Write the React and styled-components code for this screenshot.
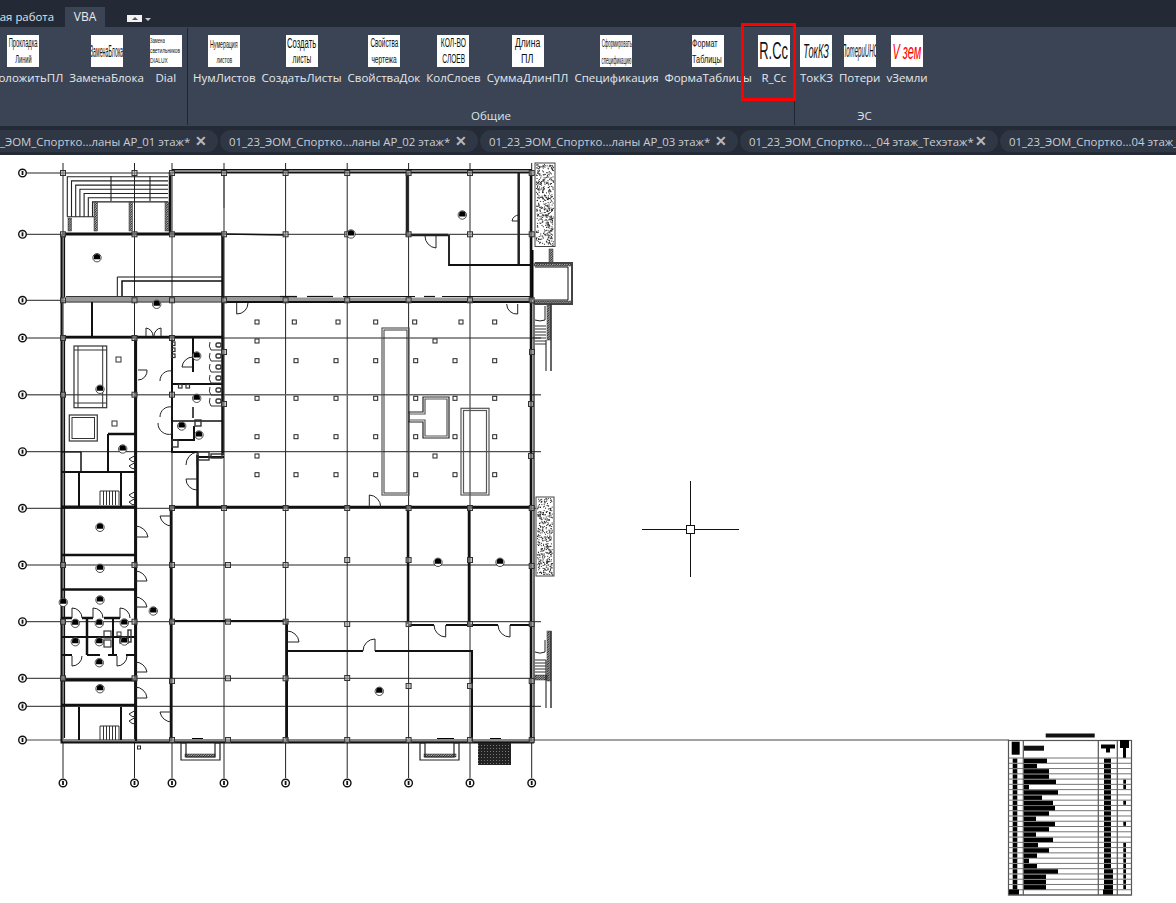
import React from "react";
import styled, { createGlobalStyle } from "styled-components";

const GlobalStyle = createGlobalStyle`
  html, body { margin: 0; padding: 0; background: #fff; overflow: hidden; }
  body { font-family: "Open Sans", "Noto Sans", sans-serif; }
`;

const Page = styled.div`
  position: relative;
  width: 1176px;
  height: 903px;
  overflow: hidden;
  display: flex;
  flex-direction: column;
`;

const TopStrip = styled.div`
  height: 27px;
  flex: none;
  background: #232a35;
  display: flex;
  align-items: flex-end;
`;

const ClippedTab = styled.div`
  width: 65px;
  height: 20px;
  line-height: 20px;
  padding-right: 11px;
  box-sizing: border-box;
  display: flex;
  justify-content: flex-end;
  overflow: hidden;
  white-space: nowrap;
  font-size: 11.4px;
  color: #dfe3e8;
`;

const ActiveTab = styled.div`
  width: 40px;
  height: 20px;
  line-height: 20px;
  text-align: center;
  font-size: 12px;
  color: #e8ebef;
  background: #3b4454;
`;

const Minimize = styled.div`
  margin: 0 0 5px 22px;
  width: 15px;
  height: 7px;
  background: #f2f2f2;
  display: flex;
  align-items: center;
  justify-content: center;
  &::after {
    content: "";
    border: 3px solid transparent;
    border-top: 0;
    border-bottom: 3px solid #555;
  }
`;

const Caret = styled.div`
  margin: 0 0 6px 3px;
  border: 3px solid transparent;
  border-bottom: 0;
  border-top: 3px solid #c8ccd2;
`;

const Ribbon = styled.div`
  height: 99px;
  flex: none;
  background: #3b4454;
  display: flex;
  margin-left: -17px;
`;

const Panel = styled.div`
  display: flex;
  flex-direction: column;
  width: ${(p) => p.$width}px;
  border-right: 1px solid ${(p) => (p.$last ? "transparent" : "#20262f")};
  margin: 1px 0;
  box-sizing: border-box;
`;

const PanelButtons = styled.div`
  flex: 1;
  display: flex;
  gap: 6px;
  padding-left: ${(p) => p.$pad}px;
`;

const PanelTitle = styled.div`
  height: 22px;
  text-align: center;
  font-size: 11.5px;
  line-height: 26px;
  color: #dfe3e8;
`;

const ToolButton = styled.div`
  display: flex;
  flex-direction: column;
  align-items: center;
  padding-top: 7px;
  flex: none;
`;

const Icon = styled.div`
  width: 32px;
  height: 32px;
  background: #fff;
  display: flex;
  flex-direction: column;
  align-items: ${(p) => (p.$left ? "flex-start" : "center")};
  justify-content: center;
  gap: ${(p) => p.$gap || 0}px;
  overflow: hidden;
  flex: none;
`;

const IconLine = styled.span`
  display: block;
  white-space: nowrap;
  font-family: "Liberation Sans", Arial, sans-serif;
  font-size: ${(p) => p.$size}px;
  line-height: ${(p) => p.$size + 1}px;
  font-style: ${(p) => (p.$italic ? "italic" : "normal")};
  color: ${(p) => p.$color || "#111"};
  transform: scaleX(${(p) => p.$sx});
  transform-origin: ${(p) => (p.$left ? "left center" : "center")};
`;

const ToolLabel = styled.div`
  margin-top: 3px;
  font-size: 11.5px;
  line-height: 16px;
  white-space: nowrap;
  color: #e6e9ed;
`;

const DocTabs = styled.div`
  height: 29px;
  flex: none;
  background: #252b36;
  display: flex;
  gap: 2px;
  padding-top: 4px;
  box-sizing: border-box;
  margin-left: -40px;
`;

const DocTab = styled.div`
  width: 258px;
  height: 22px;
  flex: none;
  background: #2f3644;
  border-radius: 11px;
  display: flex;
  align-items: center;
  justify-content: space-between;
  box-sizing: border-box;
  padding: 0 11px 0 9px;
  font-size: 11.4px;
  color: #c9ced6;
  white-space: nowrap;
`;

const CloseMark = styled.span`
  font-family: "Liberation Sans", Arial, sans-serif;
  font-size: 14px;
  font-weight: 700;
  line-height: 1;
  color: #b4b9c1;
`;

const Canvas = styled.div`
  flex: 1;
  background: #fff;
  min-height: 0;
`;

const Highlight = styled.div`
  position: absolute;
  left: 741px;
  top: 23px;
  width: 55px;
  height: 78px;
  box-sizing: border-box;
  border: 3px solid #f00;
  pointer-events: none;
`;

const panels = [
  {
    width: 205,
    pad: 0,
    tools: [
      { label: "ПроложитьПЛ", lines: [["Прокладка", 12, 0.48], ["Линий", 10, 0.57]], gap: 4 },
      { label: "ЗаменаБлока", lines: [["ЗаменаБлока", 16, 0.33]] },
      { label: "Dial", lines: [["Замена", 7, 0.6], ["светильников", 7, 0.68], ["DIALUX", 7, 0.7]], gap: 2, left: true },
    ],
  },
  {
    width: 607,
    pad: 5,
    title: "Общие",
    tools: [
      { label: "НумЛистов", lines: [["Нумерация", 11, 0.48], ["листов", 9, 0.55]], gap: 5 },
      { label: "СоздатьЛисты", lines: [["Создать", 14, 0.55], ["листы", 12, 0.55]], gap: 2 },
      { label: "СвойстваДок", lines: [["Свойства", 12, 0.53], ["чертежа", 11, 0.6]], gap: 3 },
      { label: "КолСлоев", lines: [["КОЛ-ВО", 12, 0.56], ["СЛОЕВ", 12, 0.55]], gap: 3 },
      { label: "СуммаДлинПЛ", lines: [["Длина", 12, 0.72], ["ПЛ", 12, 0.75]], gap: 3 },
      { label: "Спецификация", lines: [["Сформировать", 11, 0.39], ["спецификацию", 11, 0.39]], gap: 5 },
      { label: "ФормаТаблицы", lines: [["Формат", 10, 0.72], ["Таблицы", 11, 0.66]], gap: 4, left: true },
      { label: "R_Cc", lines: [["R.Cc", 23, 0.56]] },
    ],
  },
  {
    width: 140,
    pad: 5,
    last: true,
    title: "ЭС",
    tools: [
      { label: "ТокКЗ", lines: [["ТокКЗ", 20, 0.46, { italic: true }]] },
      { label: "Потери", lines: [["ПотериUНО", 19, 0.32, { italic: true }]] },
      { label: "vЗемли", lines: [["V зем", 22, 0.5, { italic: true, color: "#f00" }]] },
    ],
  },
];

const docTabs = [
  "01_23_ЭОМ_Спортко...ланы АР_01 этаж*",
  "01_23_ЭОМ_Спортко...ланы АР_02 этаж*",
  "01_23_ЭОМ_Спортко...ланы АР_03 этаж*",
  "01_23_ЭОМ_Спортко..._04 этаж_Техэтаж*",
  "01_23_ЭОМ_Спортко...04 этаж_Техэтаж*",
];

// drawing data, in page coordinates
const gridX = [63, 134.5, 172, 224, 285.6, 347.2, 408.6, 470, 531.7];
const gridY = [
  [173, 532], [234.3, 532], [300.3, 532], [338, 541], [394.7, 541, "#666"], [451.7, 541],
  [508.3, 541], [565, 532], [621.7, 541], [678.3, 532], [706.3, 541],
];

const columns = [
  [63, 173], [134.5, 173], [172, 173], [224, 173], [285.6, 173], [347.2, 173], [408.6, 173], [470, 173], [531.7, 173],
  [63, 234.3], [134.5, 234.3], [172, 234.3], [224, 234.3], [285.6, 234.3], [347.2, 234.3], [408.6, 234.3], [470, 234.3], [531.7, 234.3],
  [63, 300.3], [134.5, 300.3], [172, 300.3], [224, 300.3], [285.6, 300.3], [347.2, 300.3], [408.6, 300.3], [470, 300.3], [531.7, 300.3],
  [63, 338], [134.5, 338], [172, 338], [63, 394.7], [134.5, 394.7], [172, 394.7], [224, 352], [224, 404],
  [532, 352], [531, 404], [531, 456], [172, 508], [224, 508], [285.6, 508], [347.2, 508], [408.6, 508], [470, 508], [531.7, 508],
  [63, 565], [134.5, 565], [172, 565], [228, 565], [285.6, 565], [347.2, 560], [408.6, 560], [470, 560], [531.7, 566],
  [63, 621.7], [134.5, 621.7], [172, 621.7], [228, 621.7], [285.6, 621.7], [347.2, 624], [408.6, 624], [470, 624], [531.7, 624],
  [63, 678.3], [134.5, 678.3], [172, 681], [228, 678.3], [285.6, 678.3], [347.2, 678], [408.6, 686], [470, 686], [531.7, 681],
  [172, 740], [228, 740], [285.6, 740], [347.2, 740], [408.6, 740], [470, 740], [531.7, 740],
];

const walls = [
  // grey wall bands go first, dark lines run over them
  ["66,299 297,299", 5, "#999"],
  ["285,299.5 532,299.5", 4, "#999"],
  ["172,171 532,171", 4, "#888"],
  ["62,741 534,741", 4, "#888"],
  // outer shell
  ["61.5,234 61.5,742.5 534,742.5", 2],
  ["64.5,234 64.5,297", 1.2],
  ["64.5,338 64.5,738", 1.2],
  ["172,169.5 532,169.5", 1.2],
  ["172,172.5 532,172.5", 1.2],
  ["62,234 224,234", 3],
  ["224,234 285,235", 1.5],
  ["531,170 531,741", 2.5],
  ["534,300 534,741", 1.2],
  // terrace
  ["170,172 170,234", 2.5],
  ["224,175 224,208", 1.5, "#666"],
  // upper part
  ["66,296.5 297,296.5", 1, "#333"],
  ["224,302 532,302", 2],
  ["62,302 222,302", 1],
  ["117.3,296 117.3,277 222,277", 1],
  ["122,296 122,281 222,281", 1.5],
  ["222.5,234 222.5,455", 2.5],
  ["92,302 92,337", 2],
  ["62,337 222,337", 2.5],
  ["280,296.5 297,296.5", 1.2],
  ["307,296.5 333,296.5", 1.2],
  ["343,296.5 415,296.5", 1.2],
  ["424,296.5 435,296.5", 1.2],
  ["442,296.5 530,296.5", 1.2],
  ["407,173 407,235 448,235", 2.5, "#222"],
  ["449,235 449,265 533,265", 1.8],
  ["518.7,173 518.7,264", 2.5, "#222"],
  // left block
  ["136,338 136,741", 2.2],
  ["172,338 172,452 198,452", 2],
  ["62,452 81,452", 1.2],
  ["81,452 81,472", 1.5],
  ["108,434 135,434", 2.5],
  ["108,434 108,472", 2],
  ["62,472 136,472", 2],
  ["79,472 79,506", 2],
  ["121,472 121,506", 2],
  ["62,507 136,507", 3],
  ["62,555 136,555", 2.5],
  ["62,589.5 136,589.5", 2.5],
  ["62,618 72,618", 2.5],
  ["82,618 93,618", 2.5],
  ["104,618 120,618", 2.5],
  ["87,618 87,655", 2.5],
  ["113,618 113,655", 2],
  ["62,637 136,637", 2],
  ["62,655 72,655", 2],
  ["87,655 100,655", 2],
  ["108,655 117,655", 2],
  ["126,655 136,655", 2],
  ["62,680 136,680", 3],
  ["62,705 136,705", 2.5],
  ["79,707 79,740", 2],
  ["121,707 121,740", 2],
  // wet rooms
  ["193,338 193,372", 2],
  ["172,384 222,384", 2],
  ["172,421 222,421", 1.5],
  ["193,407 193,418", 1.5],
  ["172,440 194,440 194,426", 2],
  ["197.5,455 197.5,507", 2.5],
  ["198,457 224,457", 2],
  // large halls
  ["171,506 171,741", 2.5],
  ["171,507 532,507", 2.5],
  ["408,507 408,624", 2.5],
  ["469,507 469,624", 2.5],
  ["408,625 434,625", 2],
  ["446,625 498,625", 2],
  ["510,625 532,625", 2],
  ["171,621 287,621", 2],
  ["287,621 287,741", 2],
  ["287,651 363,651", 1.8],
  ["375,651 472,651 472,741", 2],
  // right annex
  ["535,263 572,263 572,304 535,304", 2, "#444"],
  ["535,267 568,267 568,300 535,300", 1],
  ["551,304 551,371", 1.5, "#333"],
  ["546,340 546,371", 1],
  ["551,631 551,708", 1.5, "#333"],
  ["546,660 546,708", 1],
];

const hatched = [
  [68, 218, 3.5, 13], [94, 202, 3.5, 29], [129, 202, 3.5, 29], [165, 202, 3.5, 29],
  [549, 249, 4, 14], [534, 263, 38, 3], [534, 301, 38, 3], [547, 305, 4, 35],
  [547, 631, 4, 50], [535, 675, 12, 5], [185, 754, 30, 3], [424, 754, 32, 3],
];

const solid = [
  [530, 250, 3.5, 50], [437, 738, 17, 4], [490, 738, 11, 4], [192, 738, 11, 4],
];

const ceilingRows = [
  [322, [257, 294.3, 338, 375.7, 414.7, 461, 494.7]],
  [360.7, [257, 296, 336, 375.7, 415.7, 455, 494.7]],
  [398.3, [257, 296, 336, 375.7, 415.7, 455, 494.7]],
  [436.7, [257, 296, 336, 375.7, 415.7, 455, 494.7]],
  [474.7, [257, 296, 336, 375.7, 415.7, 455, 494.7]],
  [341, [257, 435]],
  [456, [257, 435]],
];

const lamps = [
  [97, 257.7], [156.7, 304.3], [100, 389.3], [196.7, 356], [196.7, 398.3], [181.7, 426], [199, 435], [122.7, 449],
  [351, 234], [462.3, 215], [100, 527.3], [100, 568.3], [100, 600], [63.3, 602.3], [153.3, 611], [75.3, 623.3],
  [99.3, 623.3], [124.3, 623], [75.3, 641.7], [99.3, 641.7], [124.3, 641], [99.3, 662.7], [100, 688.7],
  [438, 562.3], [500, 562.3], [379.3, 691.3],
];

// hinge x, y, then leaf end and arc end
const doors = [
  [236.7, 303, 236.7, 314, 248, 303], [138, 370, 147, 370, 138, 380], [172, 381, 172, 371, 160, 381],
  [172, 417, 172, 407, 160, 417], [172, 423, 172, 434, 158, 423], [146, 336, 146, 328, 153, 336],
  [161, 336, 161, 328, 154, 336], [193, 367, 182, 367, 193, 357], [135, 537, 148, 537, 135, 526],
  [135, 581, 147, 581, 135, 571], [135, 607, 147, 607, 135, 597], [135, 672, 147, 672, 135, 662],
  [135, 698, 147, 698, 135, 687], [172, 516, 160, 516, 172, 526], [172, 712, 160, 712, 172, 722],
  [72, 618, 72, 608, 82, 618], [93, 618, 93, 608, 103, 618], [120, 618, 120, 608, 130, 618],
  [72, 656, 72, 666, 82, 656], [117, 656, 117, 666, 127, 656], [197, 465, 197, 452, 186, 465],
  [197, 479, 186, 479, 197, 490], [436, 236, 436, 248, 425, 236], [517.7, 304, 517.7, 314, 506.7, 304],
  [519, 221, 512, 221, 519, 215], [369.3, 507, 369.3, 495, 380.7, 507], [445.7, 625, 445.7, 637, 434, 625],
  [510, 625, 510, 637, 498, 625], [375, 651, 375, 639, 363, 651], [287, 642, 299, 642, 287, 631],
  [545, 306, 545, 320, 535, 320], [545, 640, 545, 652, 535, 652], [136, 455, 129, 459, 136, 462],
  [136, 462, 129, 466, 136, 469], [136, 491, 129, 495, 136, 498], [136, 498, 129, 502, 136, 505],
  [136, 710, 129, 714, 136, 717], [136, 717, 129, 721, 136, 724],
];

const stalls = [342, 353, 364, 375, 387, 398];
const scheduleBars = [
  [23, 0], [13, 0], [25, 0], [25, 0], [32, 1], [5, 1], [34, 0], [18, 0], [29, 1], [31, 0], [25, 0], [12, 0], [31, 1],
  [25, 0], [12, 0], [29, 0], [14, 1], [25, 1], [13, 1], [5, 1], [13, 1], [34, 1], [22, 1], [22, 1], [22, 1],
];

let seed = 7;
const rnd = () => {
  seed = (seed * 16807) % 2147483647;
  return seed / 2147483647;
};
const speckle = (x, y, w, h) =>
  Array.from({ length: Math.round((w * h) / 3.2) }, () => [x + rnd() * (w - 1), y + rnd() * (h - 1)]);
const speckles = [...speckle(536, 164, 18, 82), ...speckle(537, 498, 16, 78)];

const Lamp = ({ x, y }) => (
  <g>
    <circle cx={x} cy={y} r="4.2" fill="#fff" stroke="#222" strokeWidth="0.8" />
    <path d={`M${x - 3.2} ${y - 0.5} A3.2 3.2 0 0 1 ${x + 3.2} ${y - 0.5} L${x + 3.2} ${y + 1.5} L${x - 3.2} ${y + 1.5} Z`} fill="#000" />
  </g>
);

const Bubble = ({ x, y }) => (
  <g>
    <circle cx={x} cy={y} r="3.8" fill="#fff" stroke="#111" strokeWidth="1.4" />
    <line x1={x} y1={y - 2} x2={x} y2={y + 2} stroke="#111" strokeWidth="1.8" />
  </g>
);

const Schedule = () => (
  <g>
    <rect x="1045.7" y="733.5" width="49" height="4" fill="#111" />
    <rect x="1008.5" y="740.5" width="123" height="154.5" fill="#fff" stroke="#555" strokeWidth="1.2" />
    {[1023.3, 1098.3, 1117.3].map((x) => (
      <line key={x} x1={x} y1="740" x2={x} y2="895" stroke="#555" strokeWidth="1.2" />
    ))}
    <rect x="1011.7" y="741.7" width="8" height="13" fill="#000" />
    <rect x="1024" y="745.7" width="20" height="5" fill="#111" />
    <path d="M1101 744.5h14v4h-5v4h-4v-4h-5z" fill="#000" />
    <path d="M1120 740h9v8h-3v10h-3v-10h-3z" fill="#000" />
    {Array.from({ length: 27 }, (_, i) => (
      <line key={i} x1="1008.5" y1={758 + i * 5.27} x2="1131.5" y2={758 + i * 5.27} stroke="#666" strokeWidth="0.9" />
    ))}
    {scheduleBars.map(([w, mark], i) => {
      const y = 758.6 + i * 5.27;
      return (
        <g key={i} fill="#000">
          <rect x="1012.7" y={y} width="4.6" height="4.2" />
          <rect x="1024" y={y} width={w} height="4.4" />
          <rect x="1104" y={y} width={i > 20 ? 9 : 7} height="4.2" />
          {mark ? <rect x="1123.3" y={y} width="2.7" height="4" /> : null}
        </g>
      );
    })}
    <rect x="1009" y="889.5" width="10" height="5" fill="#000" />
    <rect x="1103" y="889.5" width="10" height="5" fill="#000" />
  </g>
);

const FloorPlan = () => (
  <svg width="1176" height="748" viewBox="0 155 1176 748" style={{ display: "block" }}>
    <defs>
      <pattern id="hatch" width="2.4" height="2.4" patternUnits="userSpaceOnUse">
        <rect width="2.4" height="2.4" fill="#bbb" />
        <path d="M0 2.4L2.4 0" stroke="#111" strokeWidth="0.9" />
      </pattern>
      <pattern id="dense" width="3" height="3" patternUnits="userSpaceOnUse">
        <rect width="3" height="3" fill="#222" />
        <rect x="1" y="1" width="1" height="1" fill="#777" />
      </pattern>
    </defs>

    {/* grid */}
    <g stroke="#222" strokeWidth="1">
      {gridX.map((x) => (
        <line key={x} x1={x} y1="163" x2={x} y2="778" />
      ))}
      {gridY.map(([y, x2, c]) => (
        <line key={y} x1="26" y1={y} x2={x2} y2={y} stroke={c || "#222"} strokeWidth={c ? 1.4 : 1} />
      ))}
      <line x1="26" y1="740" x2="1009" y2="740" stroke="#444" />
    </g>

    {/* terrace steps */}
    <g stroke="#222" strokeWidth="1.1" fill="none">
      {[0, 1, 2, 3, 4, 5, 6].map((i) => (
        <path key={i} d={`M${67.3 + i * 4.2} 216.7V${176.7 + i * 4.2}H168`} />
      ))}
      <path d="M67 216.7H95M111 176V201M150 176V201" />
    </g>

    {hatched.map(([x, y, w, h], i) => (
      <rect key={i} x={x} y={y} width={w} height={h} fill="url(#hatch)" stroke="#333" strokeWidth="0.5" />
    ))}
    {solid.map(([x, y, w, h], i) => (
      <rect key={i} x={x} y={y} width={w} height={h} fill="#000" />
    ))}

    {/* walls */}
    <g fill="none" strokeLinejoin="miter">
      {walls.map(([points, w, c], i) => (
        <polyline key={i} points={points} stroke={c || "#111"} strokeWidth={w} />
      ))}
    </g>

    {/* fitted rooms */}
    <g fill="none" stroke="#333" strokeWidth="1">
      <rect x="74" y="346" width="32.7" height="61.7" strokeWidth="1.2" />
      <path d="M78 346V407.7M102.7 346V407.7M74 350H106.7M74 403H106.7" />
      <rect x="69.3" y="415" width="28" height="26" strokeWidth="1.2" />
      <rect x="72" y="417.5" width="22.5" height="21" />
      <rect x="116" y="357" width="5" height="5" />
      <rect x="112" y="421" width="5" height="5" />
      {stalls.map((y) => (
        <g key={y}>
          <path d={`M211 ${y + 8}H222M211 ${y + 8}A8 8 0 0 1 210 ${y}`} />
          <rect x="216" y={y + 1} width="5" height="4" rx="1.5" strokeWidth="1.4" />
        </g>
      ))}
      {[344, 350, 356].map((y) => (
        <rect key={y} x="171.5" y={y - 2} width="3.5" height="3.5" strokeWidth="1.2" />
      ))}
      <rect x="178.5" y="384.5" width="3.5" height="3.5" strokeWidth="1.2" />
      <rect x="186" y="384.5" width="3.5" height="3.5" strokeWidth="1.2" />
      <rect x="104" y="631" width="7" height="7" strokeWidth="1.2" />
      <rect x="104" y="640" width="7" height="7" strokeWidth="1.2" />
      <rect x="117" y="632" width="4" height="4" />
      <rect x="128" y="630" width="3" height="12" strokeWidth="1.4" />
      <rect x="120" y="638" width="8" height="5" strokeWidth="1.4" />
      <rect x="195" y="420" width="6" height="6" strokeWidth="1.4" />
      <rect x="172" y="440" width="6" height="7" strokeWidth="1.4" />
      <rect x="198" y="452" width="11" height="8" strokeWidth="1.4" />
      <rect x="211" y="454" width="11" height="4" strokeWidth="1.4" />
      <path d="M100 505V491H119V505M103.5 491V505M106.5 491V505M109.5 491V505M112.5 491V505M115.5 491V505" />
      <path d="M100 740V726H119V740M103.5 726V740M106.5 726V740M109.5 726V740M112.5 726V740M115.5 726V740" />
      <path d="M535 326H546M535 329H546M535 332H546M535 335H546M535 338H546M535 341H546M535 344H546" />
      <path d="M535 660H546M535 663H546M535 666H546M535 669H546M535 672H546" />
    </g>

    {/* stores and ramps */}
    <g fill="none" stroke="#555" strokeWidth="1.2">
      <rect x="382" y="328" width="27" height="167" />
      <rect x="384" y="330" width="23" height="163" stroke="#222" strokeWidth="0.9" />
      <rect x="461" y="408.3" width="28" height="86.7" />
      <rect x="463.5" y="410.5" width="23" height="82.5" />
      <polygon points="409,412 423,412 423,397 449,397 449,438 423,438 423,422 409,422" stroke="#222" />
      <polygon points="409,414 425,414 425,399 447,399 447,436 425,436 425,420 409,420" />
      <path d="M181 760V743H186V757H215V743H220V760Z M420 760V743H425V757H454V743H459V760Z" stroke="#222" />
    </g>
    <rect x="478" y="743" width="33" height="22" fill="url(#dense)" />

    {/* ceiling points */}
    <g fill="#fff" stroke="#222" strokeWidth="1">
      {ceilingRows.flatMap(([y, xs]) =>
        xs.map((x) => <rect key={`${x}-${y}`} x={x - 2} y={y - 2} width="4" height="4" />)
      )}
      <rect x="137.5" y="746" width="3" height="3" />
    </g>

    {/* grid columns */}
    <g fill="#aaa" fillOpacity="0.6" stroke="#333" strokeWidth="1">
      {columns.map(([x, y], i) => (
        <rect key={i} x={x - 2.5} y={y - 2.5} width="5" height="5" />
      ))}
    </g>

    <g fill="none" stroke="#222" strokeWidth="1">
      {doors.map(([hx, hy, lx, ly, ax, ay], i) => {
        const sweep = (lx - hx) * (ay - hy) - (ly - hy) * (ax - hx) > 0 ? 1 : 0;
        const r = Math.hypot(lx - hx, ly - hy);
        return <path key={i} d={`M${hx} ${hy}L${lx} ${ly}A${r} ${r} 0 0 ${sweep} ${ax} ${ay}`} />;
      })}
    </g>

    {lamps.map(([x, y], i) => (
      <Lamp key={i} x={x} y={y} />
    ))}

    {/* textured panels */}
    <rect x="535" y="163" width="20" height="83.5" fill="#fff" stroke="#444" />
    <rect x="536" y="497" width="18" height="79" fill="#fff" stroke="#444" />
    <g fill="#222">
      {speckles.map(([x, y], i) => (
        <rect key={i} x={x} y={y} width="1" height="1" />
      ))}
    </g>

    {gridX.map((x) => (
      <Bubble key={x} x={x} y={783} />
    ))}
    {[...gridY.map(([y]) => y), 740].map((y) => (
      <Bubble key={y} x={22.5} y={y} />
    ))}

    <Schedule />

    {/* crosshair */}
    <g stroke="#111" strokeWidth="1" fill="none">
      <path d="M642 529.5H739M690.5 481V577" />
      <rect x="686.5" y="525.5" width="8" height="8" fill="#fff" />
    </g>
  </svg>
);

export default function App() {
  return (
    <Page>
      <GlobalStyle />
      <TopStrip>
        <ClippedTab>Совместная работа</ClippedTab>
        <ActiveTab>VBA</ActiveTab>
        <Minimize />
        <Caret />
      </TopStrip>
      <Ribbon>
        {panels.map((panel) => (
          <Panel key={panel.width} $width={panel.width} $last={panel.last}>
            <PanelButtons $pad={panel.pad}>
              {panel.tools.map((tool) => (
                <ToolButton key={tool.label}>
                  <Icon $left={tool.left} $gap={tool.gap}>
                    {tool.lines.map(([text, size, sx, opts = {}]) => (
                      <IconLine
                        key={text}
                        $size={size}
                        $sx={sx}
                        $left={tool.left}
                        $italic={opts.italic}
                        $color={opts.color}
                      >
                        {text}
                      </IconLine>
                    ))}
                  </Icon>
                  <ToolLabel>{tool.label}</ToolLabel>
                </ToolButton>
              ))}
            </PanelButtons>
            <PanelTitle>{panel.title}</PanelTitle>
          </Panel>
        ))}
      </Ribbon>
      <DocTabs>
        {docTabs.map((name) => (
          <DocTab key={name}>
            {name}
            <CloseMark>✕</CloseMark>
          </DocTab>
        ))}
      </DocTabs>
      <Canvas>
        <FloorPlan />
      </Canvas>
      <Highlight />
    </Page>
  );
}
